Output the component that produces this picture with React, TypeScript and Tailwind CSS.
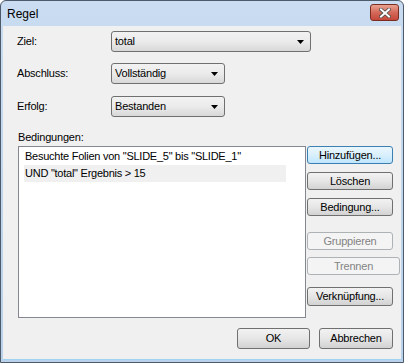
import React from 'react';

const font = "font-['Liberation_Sans',Arial,sans-serif]";

const Combo: React.FC<{ value: string; width: string }> = ({ value, width }) => (
  <div
    className={`${width} h-[21px] flex items-center pl-[3px] pr-[6px] rounded-[3px] border border-[#707070] bg-gradient-to-b from-[#f2f2f2] via-[#ebebeb] to-[#d8d8d8] text-[11px] text-black`}
  >
    <span className="flex-1">{value}</span>
    <svg width="7" height="4" viewBox="0 0 7 4">
      <path d="M0 0h7L3.5 4z" fill="#000" />
    </svg>
  </div>
);

type BtnKind = 'normal' | 'default' | 'disabled';

const Btn: React.FC<{ label: string; kind?: BtnKind; className?: string }> = ({
  label,
  kind = 'normal',
  className = '',
}) => {
  const look =
    kind === 'default'
      ? 'border-[#3c7fb1] bg-gradient-to-b from-[#eaf6fd] via-[#d9f0fc] to-[#bee6fd] text-black'
      : kind === 'disabled'
        ? 'border-[#adb2b5] bg-[#f4f4f4] text-[#838383]'
        : 'border-[#707070] bg-gradient-to-b from-[#f2f2f2] via-[#e6e6e6] to-[#d2d2d2] text-black';
  return (
    <div
      className={`flex items-center justify-center rounded-[3px] border text-[11px] ${look} ${className}`}
    >
      {label}
    </div>
  );
};

export default function App() {
  return (
    <div
      className={`${font} w-[404px] h-[363px] flex flex-col rounded-t-[6px] border border-[#4c5a6a] bg-gradient-to-b from-[#c9dcf1] to-[#b9d1ea]`}
    >
      {/* title bar */}
      <div className="h-[25px] flex items-center pl-[6px] pr-[4px]">
        <span className="flex-1 text-[12px] text-black">Regel</span>
        <div className="mt-[-2px] w-[29px] h-[17px] rounded-[3px] border border-[#7a2e22] bg-gradient-to-b from-[#e8a291] via-[#d4695a] to-[#c5483a] flex items-center justify-center">
          <svg width="12" height="10" viewBox="0 0 12 10">
            <path d="M2 1.5l8 7M10 1.5l-8 7" stroke="#4a4a4a" strokeWidth="3.6" strokeLinecap="square" />
            <path d="M2 1.5l8 7M10 1.5l-8 7" stroke="#fff" strokeWidth="2" strokeLinecap="square" />
          </svg>
        </div>
      </div>

      {/* client area */}
      <div className="flex-1 mx-[2px] mb-[2px] bg-[#f0f0f0] pt-[5px] pl-[14px] text-[11px] text-black tracking-[-0.2px] border-b border-[#9fd3f0]">
        <div className="flex items-center h-[21px]">
          <span className="w-[94px]">Ziel:</span>
          <Combo value="total" width="w-[200px]" />
        </div>
        <div className="flex items-center h-[21px] mt-[11px]">
          <span className="w-[94px]">Abschluss:</span>
          <Combo value="Vollständig" width="w-[114px]" />
        </div>
        <div className="flex items-center h-[21px] mt-[12px]">
          <span className="w-[94px]">Erfolg:</span>
          <Combo value="Bestanden" width="w-[114px]" />
        </div>

        <div className="mt-[13px] h-[15px] pl-[1px] leading-[15px]">Bedingungen:</div>

        <div className="flex mt-[1px]">
          <div className="ml-[1px] w-[288px] h-[172px] border border-[#828790] bg-white pt-[1px] pl-[5px] tracking-[-0.25px]">
            <div className="h-[17px] flex items-center pl-[1px]">
              Besuchte Folien von "SLIDE_5" bis "SLIDE_1"
            </div>
            <div className="h-[17px] w-[262px] flex items-center pl-[1px] bg-[#f0f0f0]">
              UND "total" Ergebnis &gt; 15
            </div>
          </div>

          <div className="ml-[1px] flex flex-col">
            <Btn label="Hinzufügen..." kind="default" className="w-[86px] h-[18px]" />
            <Btn label="Löschen" className="w-[86px] h-[18px] mt-[8px]" />
            <Btn label="Bedingung..." className="w-[86px] h-[18px] mt-[8px]" />
            <Btn label="Gruppieren" kind="disabled" className="w-[86px] h-[18px] mt-[16px]" />
            <Btn label="Trennen" kind="disabled" className="w-[93px] h-[18px] mt-[7px]" />
            <Btn label="Verknüpfung..." className="w-[86px] h-[19px] mt-[12px]" />
          </div>
        </div>

        <div className="flex justify-end gap-[9px] mt-[10px] pr-[8px]">
          <Btn label="OK" className="w-[73px] h-[21px]" />
          <Btn label="Abbrechen" className="w-[74px] h-[21px]" />
        </div>
      </div>
    </div>
  );
}
